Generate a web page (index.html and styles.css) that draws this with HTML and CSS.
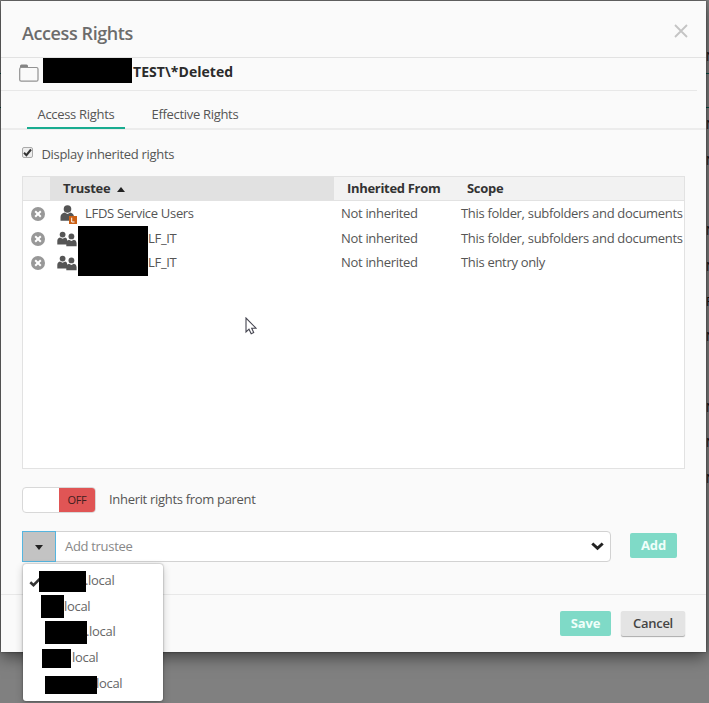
FILE: index.html
```html
<!DOCTYPE html>
<html lang="en">
<head>
<meta charset="utf-8">
<title>Access Rights</title>
<link rel="stylesheet" href="styles.css">
</head>
<body>
<svg width="0" height="0" class="defs">
  <symbol id="remove" viewBox="0 0 14 14"><circle cx="7" cy="7" r="7" fill="#989898"/><path d="M4.200 4.200l5.600 5.600M9.800 4.200l-5.600 5.600" stroke="#fff" stroke-width="2"/></symbol>
  <symbol id="group" viewBox="0 0 20 16"><g fill="#555"><circle cx="5.600" cy="3.600" r="2.900"/><path d="M.3 13.500V10Q.3 7.200 3 6.600L5.600 7.800 8.200 6.600Q10.300 7 10.300 9.500V13.500z"/><circle cx="14.400" cy="5.400" r="2.900"/><path d="M9.300 15.300V12Q9.500 9.300 12 8.700L14.400 9.900 16.900 8.700Q19.600 9.300 19.600 12V15.300z"/></g></symbol>
</svg>
<div class="backdrop">
  <i class="rule r1"></i><i class="rule r2"></i>
  <b class="n1">N</b><b class="n2">N</b><b class="n3">N</b><b class="n4">N</b><b class="n5">N</b><b class="n6">F</b><b class="n7">N</b><b class="n8">N</b><b class="n9">N</b><b class="n10">N</b>
</div>
<main class="dialog">
  <header class="head">
    <h1>Access Rights</h1>
    <svg class="close" width="14" height="14" viewBox="0 0 14 14"><path d="M1 1l12 12M13 1L1 13" stroke="#c4c4c4" stroke-width="1.800"/></svg>
  </header>
  <div class="path">
    <svg width="20" height="18" viewBox="0 0 20 18"><path d="M1 4V2Q1 .5 2.500.5H7.500Q9 .5 9 2V4z" fill="#858585"/><rect x=".7" y="3.500" width="18.300" height="13.700" rx="1.500" fill="#fafafa" stroke="#929292" stroke-width="1.200"/></svg>
    <span class="mask"></span><strong>TEST\*Deleted</strong>
  </div>
  <nav class="tabs"><span class="tab active">Access Rights</span><span class="tab">Effective Rights</span></nav>
  <section class="content">
    <label class="inherited"><span class="check"><svg width="9" height="9" viewBox="0 0 9 9"><path d="M1 4.800L3.400 7.200 8 1.500" fill="none" stroke="#333" stroke-width="2"/></svg></span><span>Display inherited rights</span></label>
    <div class="table">
      <div class="row thead"><span></span><span class="sorted">Trustee<i class="up"></i></span><span class="from">Inherited From</span><span class="scope">Scope</span></div>
      <div class="row"><svg class="remove"><use href="#remove"/></svg><span class="trustee"><svg class="user" width="18" height="19" viewBox="0 0 18 19"><g fill="#555"><circle cx="7.500" cy="4" r="3.800"/><path d="M.5 15.800V12Q.5 8.500 4.500 7.500L7.500 9 10.500 7.500Q14 8.500 14 12V15.800z"/></g><path d="M9 11h8v8H9z" fill="#cb6015"/><path d="M11.700 12.700v4.300h2.800" stroke="#fff" fill="none"/></svg>LFDS Service Users</span><span>Not inherited</span><span>This folder, subfolders and documents</span></div>
      <div class="row"><svg class="remove"><use href="#remove"/></svg><span class="trustee"><svg class="group"><use href="#group"/></svg><i class="mask"></i>LF_IT</span><span>Not inherited</span><span>This folder, subfolders and documents</span></div>
      <div class="row"><svg class="remove"><use href="#remove"/></svg><span class="trustee"><svg class="group"><use href="#group"/></svg><i class="mask"></i>LF_IT</span><span>Not inherited</span><span>This entry only</span></div>
    </div>
    <div class="toggle-row"><span class="toggle"><span>OFF</span></span><span class="toggle-label">Inherit rights from parent</span></div>
    <div class="add-row">
      <div class="combo">
        <span class="domain"><i class="down"></i></span><span class="field">Add trustee</span>
        <svg width="13" height="9" viewBox="0 0 13 9"><path d="M1.300 1.500L6.500 6.300 11.700 1.500" fill="none" stroke="#222" stroke-width="3"/></svg>
        <div class="menu">
          <div class="m1"><svg width="13" height="10" viewBox="0 0 13 10"><path d="M1.300 5.200L4.500 8.200 11.500 1.200" fill="none" stroke="#333" stroke-width="2.600"/></svg><i></i><span>.local</span></div>
          <div class="m2"><i></i><span>local</span></div>
          <div class="m3"><i></i><span>.local</span></div>
          <div class="m4"><i></i><span>local</span></div>
          <div class="m5"><i></i><span>local</span></div>
        </div>
      </div>
      <span class="btn primary add">Add</span>
    </div>
  </section>
  <footer class="foot"><span class="btn primary save">Save</span><span class="btn cancel">Cancel</span></footer>
</main>
<svg class="cursor" width="12" height="18" viewBox="0 0 12 18"><path d="M1 1v14l3-2.800 2.200 4.500 2.500-1.200-2-4.300H11z" fill="#fff" stroke="#454550" stroke-width="1.100"/></svg>
</body>
</html>
```
FILE: styles.css
```css
* { box-sizing: border-box; }
body { margin: 0; width: 709px; height: 703px; overflow: hidden; position: relative; background: #808080; padding: 1px; font: 13px/18px "Open Sans", sans-serif; letter-spacing: -.31px; color: #555; }
svg { display: block; flex: none; }
.defs { position: absolute; }
i { font-style: normal; }
.dialog { position: relative; width: 705px; height: 651px; display: flex; flex-direction: column; background: #fafafa; box-shadow: 0 5px 15px rgba(0,0,0,.5), 0 0 2px rgba(0,0,0,.5); }
.head { height: 57px; border-bottom: 1px solid #e2e2e2; display: flex; justify-content: space-between; padding: 20px 18px 0 21px; }
h1 { margin: 0; font-size: 18px; line-height: 25px; font-weight: 600; letter-spacing: -.4px; color: #6c6c6c; }
.close { margin-top: 3px; }
.path { height: 33px; width: 696px; border-bottom: 1px solid #e8e8e8; display: flex; padding-left: 18px; color: #2b2b2b; font-size: 14px; letter-spacing: .05px; }
.path svg { margin-top: 6px; }
.path .mask { width: 89px; height: 25px; background: #000; margin-left: 4px; }
.path strong { padding: 5px 0 0 1px; }
.tabs { height: 39px; border-bottom: 2px solid #ececec; display: flex; padding-left: 25.5px; gap: 16px; }
.tab { height: 38px; padding: 14px 11px 0; white-space: nowrap; }
.tab.active { width: 98px; border-bottom: 2px solid #19ac90; }
.content { height: 464px; padding: 15px 0 0 21px; }
.inherited { display: flex; height: 31px; }
.check { width: 11px; height: 11px; margin: 2px 8.5px 0 0; border: 1px solid #aaa; border-radius: 2px; background: #eee; }
.table { width: 663px; height: 293px; border: 1px solid #e2e2e2; background: #fff; overflow: hidden; }
.row { display: grid; grid-template-columns: 27px 288px 120px 1fr; height: 24.7px; white-space: nowrap; line-height: 24px; padding-left: 3px; }
.row > .remove { width: 14px; height: 14px; margin: 6px 0 0 5px; }
.trustee { display: flex; padding-left: 7px; }
.user { margin: 4px 7px 0 0; }
.trustee .group { width: 20px; height: 16px; margin: 5px 1px 0 -3px; }
.trustee .mask { width: 70px; height: 25.5px; background: #000; flex: none; }
.thead { grid-template-columns: 27px 284px 120px 1fr; padding: 0; height: 24px; background: #f2f2f2; border-bottom: 1px solid #e2e2e2; color: #333; font-weight: 700; line-height: 23px; }
.sorted { background: #e1e1e1; padding-left: 13px; }
.up { display: inline-block; border: 4.5px solid transparent; border-top: 0; border-bottom: 5px solid #222; margin: 0 0 1px 7px; }
.from, .scope { padding-left: 13px; }
.toggle-row { display: flex; margin-top: 18px; }
.toggle { width: 74px; height: 26px; border: 1px solid #d8d8d8; border-radius: 4px; overflow: hidden; background: #fff; display: flex; justify-content: flex-end; }
.toggle span { width: 36px; background: #e05555; color: #402020; font-size: 11px; line-height: 24px; text-align: center; }
.toggle-label { margin: 3px 0 0 13px; }
.add-row { display: flex; margin-top: 18px; }
.combo { position: relative; width: 589px; height: 31px; border: 1px solid #d2d2d2; border-radius: 4px; background: #fff; display: flex; align-items: center; padding-right: 6px; }
.domain { width: 34px; height: 31px; margin-left: -1px; border: 1px solid #55b5df; background: #c3c3c3; display: flex; align-items: center; justify-content: center; }
.down { border: 4.5px solid transparent; border-bottom: 0; border-top: 5px solid #222; margin-top: 2px; }
.field { flex: 1; padding: 0 0 2px 9px; color: #888; }
.menu { position: absolute; z-index: 2; left: 0; top: 32px; width: 140px; height: 137px; border-radius: 3px; background: #fff; box-shadow: 0 0 2px rgba(0,0,0,.45), 0 3px 8px rgba(0,0,0,.2); padding-top: 4px; }
.menu div { display: flex; height: 25.8px; line-height: 25px; color: #666; }
.menu i { background: #000; flex: none; position: relative; }
.menu .m1 span, .menu .m3 span, .menu .m5 span { margin-left: -1px; }
.m1 svg { margin: 9px -3px 0 6px; }
.m1 i { width: 47px; height: 21px; margin-top: 3px; }
.m2 i { width: 23px; height: 23px; margin: 1px 0 0 18px; }
.m3 i { width: 42px; height: 23px; margin: 1px 0 0 22px; }
.m4 i { width: 29px; height: 19px; margin: 4px 1px 0 19px; }
.m5 i { width: 52px; height: 18px; margin: 5px 0 0 22px; }
.menu .m3 span { margin-top: -1px; }
.btn { font-weight: 700; text-align: center; border-radius: 2px; letter-spacing: -.1px; }
.primary { background: #7fdac7; color: #effffa; }
.add { width: 47px; height: 25px; margin: 2px 0 0 19px; line-height: 25px; }
.foot { flex: 1; border-top: 1px solid #e8e8e8; padding: 16px 21px 0 0; display: flex; justify-content: flex-end; gap: 10px; }
.save { width: 51px; height: 25px; line-height: 25px; }
.cancel { width: 64px; height: 25px; line-height: 25px; background: #e4e4e4; color: #444; font-weight: 600; letter-spacing: -.3px; box-shadow: 0 1px 1px #aaa; }
.cursor { position: absolute; left: 245px; top: 317px; }
.backdrop b { position: absolute; left: 706px; font-size: 12px; font-weight: 400; line-height: 14px; color: #111; }
.rule { position: absolute; left: 0; right: 0; height: 1px; background: #075048; }
.r1 { top: 73px; } .r2 { top: 107px; }
.n1 { top: 50px; } .n2 { top: 118px; } .n3 { top: 154px; } .n4 { top: 224px; } .n5 { top: 260px; }
.n6 { top: 295px; } .n7 { top: 330px; } .n8 { top: 401px; } .n9 { top: 436px; } .n10 { top: 472px; }
```
